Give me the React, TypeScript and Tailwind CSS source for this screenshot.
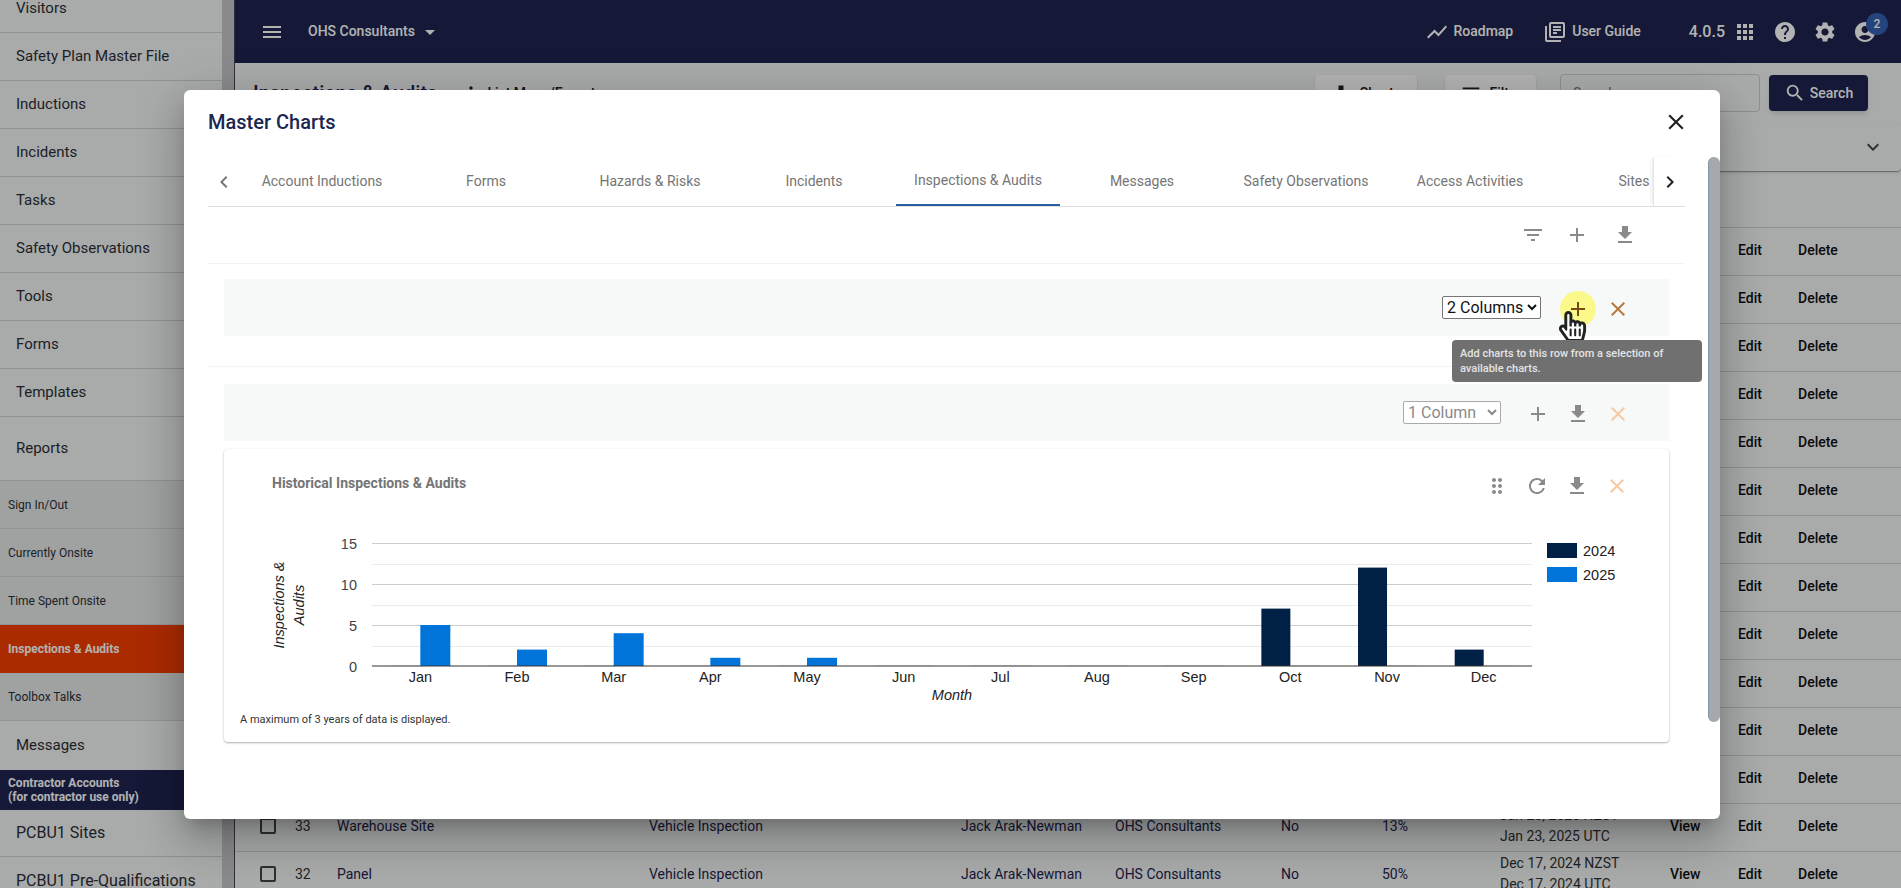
import { FaHandPointer, FaRegHandPointer } from 'react-icons/fa';
import {
  MdAccountCircle,
  MdAdd,
  MdApps,
  MdArrowDropDown,
  MdChevronLeft,
  MdChevronRight,
  MdClose,
  MdDragIndicator,
  MdExpandMore,
  MdFileDownload,
  MdFilterList,
  MdHelp,
  MdMenu,
  MdMoreVert,
  MdOutlineLibraryBooks,
  MdRefresh,
  MdSearch,
  MdSettings,
  MdShowChart,
} from 'react-icons/md';

const topNav = ['Visitors', 'Safety Plan Master File', 'Inductions', 'Incidents', 'Tasks', 'Safety Observations', 'Tools', 'Forms', 'Templates'];
const reportNav = ['Sign In/Out', 'Currently Onsite', 'Time Spent Onsite', 'Inspections & Audits', 'Toolbox Talks'];
const tabs = ['Account Inductions', 'Forms', 'Hazards & Risks', 'Incidents', 'Inspections & Audits', 'Messages', 'Safety Observations', 'Access Activities', 'Sites'];

const rows = [
  ...Array.from({ length: 12 }, (_, i) => ({ id: String(45 - i), site: '', pct: '', date: ['', ''] })),
  { id: '33', site: 'Warehouse Site', pct: '13%', date: ['Jan 23, 2025 NZST', 'Jan 23, 2025 UTC'] },
  { id: '32', site: 'Panel', pct: '50%', date: ['Dec 17, 2024 NZST', 'Dec 17, 2024 UTC'] },
];

const months = [
  { m: 'Jan', a: 0, b: 5 },
  { m: 'Feb', a: 0, b: 2 },
  { m: 'Mar', a: 0, b: 4 },
  { m: 'Apr', a: 0, b: 1 },
  { m: 'May', a: 0, b: 1 },
  { m: 'Jun', a: 0, b: 0 },
  { m: 'Jul', a: 0, b: 0 },
  { m: 'Aug', a: 0, b: 0 },
  { m: 'Sep', a: 0, b: 0 },
  { m: 'Oct', a: 7, b: 0 },
  { m: 'Nov', a: 12, b: 0 },
  { m: 'Dec', a: 2, b: 0 },
];

function Sidebar() {
  return (
    <aside className="flex w-[235px] shrink-0 border-r border-[#3f4560]">
      <div className="w-[222px] shrink-0 -mt-[15px] text-[15px] text-[#2b2f36]">
        {topNav.map((item) => (
          <div key={item} className="flex h-[48px] items-center border-b border-[#cfd1d1] pl-4">
            {item}
          </div>
        ))}
        <div className="flex h-[64px] items-center border-b border-[#cfd1d1] pb-[1px] pl-4">Reports</div>
        {reportNav.map((item) =>
          item === 'Inspections & Audits' ? (
            <div key={item} className="flex h-[48px] items-center bg-[#f53e00] pl-2 text-[12px] font-bold text-white">
              {item}
            </div>
          ) : (
            <div key={item} className="flex h-[48px] items-center border-b border-[#d3d5d5] bg-[#e6e8e8] pl-2 text-[12px]">
              {item}
            </div>
          ),
        )}
        <div className="flex h-[49px] items-center pl-4">Messages</div>
        <div className="flex h-[40px] flex-col justify-center bg-[#1f2550] pl-2 text-[12px] leading-[14px] font-bold text-white">
          <span>Contractor Accounts</span>
          <span>(for contractor use only)</span>
        </div>
        <div className="flex h-[47px] items-center border-b border-[#cfd1d1] pl-4 text-[16px]">PCBU1 Sites</div>
        <div className="flex h-[48px] items-center pl-4 text-[16px]">PCBU1 Pre-Qualifications</div>
      </div>
      <div className="w-[12px] shrink-0 bg-[#c6c6cb]" />
    </aside>
  );
}

function TopBar() {
  return (
    <header className="flex h-[63px] items-center justify-between bg-[#1f2550] pr-[24px] pl-[25px] text-white">
      <div className="flex items-center">
        <MdMenu size={24} />
        <span className="ml-[24px] text-[14px] font-medium">OHS Consultants</span>
        <MdArrowDropDown size={24} className="ml-[3px]" />
      </div>
      <div className="flex items-center">
        <MdShowChart size={24} />
        <span className="ml-[4px] text-[14px] font-medium">Roadmap</span>
        <MdOutlineLibraryBooks size={24} className="ml-[30px]" />
        <span className="ml-[5px] text-[14px] font-medium">User Guide</span>
        <span className="ml-[48px] text-[16px] font-medium">4.0.5</span>
        <MdApps size={24} className="ml-[8px]" />
        <MdHelp size={24} className="ml-[16px]" />
        <MdSettings size={24} className="ml-[16px]" />
        <span className="relative ml-[16px]">
          <MdAccountCircle size={24} />
          <span className="absolute -top-[7px] -right-[11px] flex h-[22px] w-[22px] items-center justify-center rounded-full bg-[#3560b4] text-[12px] font-medium">
            2
          </span>
        </span>
      </div>
    </header>
  );
}

function Table() {
  return (
    <div className="flex-1 overflow-hidden">
      <div className="flex h-[60px] items-center pr-[33px] pl-[18px]">
        <span className="text-[20px] font-medium text-[#1f2550]">Inspections &amp; Audits</span>
        <MdMoreVert size={20} className="ml-[24px]" />
        <span className="ml-[6px] text-[14px] font-medium">List Menu/Export</span>
        <div className="ml-auto flex items-center">
          <div className="flex h-[36px] w-[102px] items-center justify-center gap-2 rounded bg-white text-[14px] font-medium shadow">
            <MdFileDownload size={20} />
            Charts
          </div>
          <div className="ml-[28px] flex h-[36px] w-[91px] items-center justify-center gap-2 rounded bg-white text-[14px] font-medium shadow">
            <MdFilterList size={22} />
            Filter
          </div>
          <div className="ml-[24px] flex h-[38px] w-[200px] items-center rounded border border-[#ccc] pl-3 text-[14px] text-[#777]">Search</div>
          <div className="ml-[9px] flex h-[36px] w-[99px] items-center justify-center gap-1 rounded bg-[#1f2550] text-[14px] font-medium text-white shadow-md">
            <MdSearch size={22} />
            Search
          </div>
        </div>
      </div>
      <div className="flex h-[49px] items-center justify-end rounded border-b border-[#9a9a9a] pr-[16px] shadow">
        <MdExpandMore size={24} className="text-[#444]" />
      </div>
      <div className="h-[56px] border-b border-[#cfd1d1]" />
      {rows.map((row) => (
        <div
          key={row.id}
          className="grid h-[48px] grid-cols-[35px_42px_312px_312px_154px_166px_101px_118px_170px_68px_60px_1fr] items-center border-b border-[#cfd1d1] pb-[3px] pl-[25px] text-[14px] text-[#1f2550]"
        >
          <span className="h-[16px] w-[16px] rounded-[2px] border-2 border-[#444]" />
          <span className="text-[#333]">{row.id}</span>
          <span>{row.site}</span>
          <span>Vehicle Inspection</span>
          <span>Jack Arak-Newman</span>
          <span>OHS Consultants</span>
          <span>No</span>
          <span>{row.pct}</span>
          <span className="leading-[21px] text-[#333]">
            {row.date[0]}
            <br />
            {row.date[1]}
          </span>
          <span className="font-medium text-[#111]">View</span>
          <span className="font-medium text-[#111]">Edit</span>
          <span className="font-medium text-[#111]">Delete</span>
        </div>
      ))}
    </div>
  );
}

function Chart() {
  const base = 666;
  const unit = 8.2;
  return (
    <svg viewBox="224 520 1445 190" className="h-[190px] w-[1445px] [font-family:'Liberation_Sans',Arial,sans-serif]">
      {[564, 605, 646].map((y) => (
        <rect key={y} x={372} y={y} width={1160} height={1} fill="#ebebeb" />
      ))}
      {[543, 584, 625].map((y) => (
        <rect key={y} x={372} y={y} width={1160} height={1} fill="#cccccc" />
      ))}
      {[
        ['15', 543],
        ['10', 584],
        ['5', 625],
        ['0', 666],
      ].map(([label, y]) => (
        <text key={label} x={357} y={Number(y) + 5.5} textAnchor="end" fontSize={14.5} fill="#444">
          {label}
        </text>
      ))}
      {months.map((d, i) => {
        const c = 372 + 96.67 * i + 48.33;
        return (
          <g key={d.m}>
            <rect x={c - 29} y={base - Math.max(d.a * unit, 1)} width={29} height={Math.max(d.a * unit, 1)} fill={d.a ? '#012045' : '#e8e8e8'} />
            <rect x={c} y={base - Math.max(d.b * unit, 1)} width={30} height={Math.max(d.b * unit, 1)} fill={d.b ? '#0074d9' : '#e8e8e8'} />
            <text x={c} y={682} textAnchor="middle" fontSize={14.5} fill="#222">
              {d.m}
            </text>
          </g>
        );
      })}
      <rect x={372} y={665.5} width={1160} height={1} fill="#333" />
      <text x={952} y={700} textAnchor="middle" fontSize={14.5} fontStyle="italic" fill="#222">
        Month
      </text>
      <g transform="rotate(-90 284 605)" fontSize={14.5} fontStyle="italic" fill="#222" textAnchor="middle">
        <text x={284} y={605}>
          Inspections &amp;
        </text>
        <text x={284} y={625}>
          Audits
        </text>
      </g>
      <rect x={1547} y={543} width={30} height={15} fill="#012045" />
      <text x={1583} y={556} fontSize={14.5} fill="#222">
        2024
      </text>
      <rect x={1547} y={567} width={30} height={15} fill="#0074d9" />
      <text x={1583} y={580} fontSize={14.5} fill="#222">
        2025
      </text>
    </svg>
  );
}

function IconBox({ children }: { children: React.ReactNode }) {
  return <span className="flex w-[40px] justify-center">{children}</span>;
}

function MasterCharts() {
  return (
    <div className="absolute top-[90px] left-[184px] z-20 flex h-[729px] w-[1536px] flex-col overflow-hidden rounded-md bg-white pr-[35px] pl-[24px] shadow-[0_11px_15px_-7px_rgba(0,0,0,0.2),0_24px_38px_3px_rgba(0,0,0,0.14),0_9px_46px_8px_rgba(0,0,0,0.12)]">
      <div className="absolute top-[67px] right-0 bottom-[97px] w-[12px] rounded-md border-l border-[#7f95a8] bg-[#a6a9ac]" />
      <div className="flex h-[67px] shrink-0 items-center justify-between pb-[4px]">
        <h2 className="text-[20px] font-medium text-[#1b2750]">Master Charts</h2>
        <MdClose size={26} className="mr-[-4px] text-[#222]" />
      </div>
      <div className="flex h-[50px] shrink-0 border-b border-[#e0e0e0]">
        <span className="flex w-[32px] shrink-0 items-center justify-center text-[#777]">
          <MdChevronLeft size={24} />
        </span>
        <div className="flex flex-1 overflow-hidden">
          {tabs.map((tab) => (
            <span
              key={tab}
              className={
                tab === 'Inspections & Audits'
                  ? 'flex w-[164px] shrink-0 items-center justify-center border-b-2 border-[#2a5ea8] text-[14px] text-[#757575]'
                  : 'flex w-[164px] shrink-0 items-center justify-center text-[14px] text-[#757575]'
              }
            >
              {tab}
            </span>
          ))}
        </div>
        <span className="flex w-[32px] shrink-0 items-center justify-center border-l border-[#e6e6e6] text-[#222] shadow-[-3px_0_4px_-2px_rgba(0,0,0,0.1)]">
          <MdChevronRight size={24} />
        </span>
      </div>
      <div className="flex h-[57px] shrink-0 items-center justify-end border-b border-[#f3f3f3] pr-[48px] text-[#8a8a8a]">
        <MdFilterList size={24} />
        <MdAdd size={24} className="ml-[20px]" />
        <MdFileDownload size={24} className="ml-[24px]" />
      </div>
      <div className="mx-4 mt-[15px] flex h-[57px] shrink-0 items-center justify-end bg-[#f7f9f9] pr-[31px]">
        <select className="h-[23px] w-[99px] rounded-[2px] border border-[#767676] bg-white text-[16px] text-[#111]" defaultValue="2 Columns">
          <option>2 Columns</option>
        </select>
        <div className="mt-[3px] ml-[17px] flex items-center">
          <IconBox>
            <span className="relative flex items-center justify-center">
              <span className="absolute h-[36px] w-[36px] rounded-full bg-[#fbf98a]" />
              <MdAdd size={24} className="relative text-[#7a4a14]" />
              <span className="absolute top-[14px] left-[-9px] h-[31px] w-[27px]">
                <FaHandPointer size={31} className="absolute text-white" />
                <FaRegHandPointer size={31} className="absolute text-[#222]" />
              </span>
              <span className="absolute top-[43px] left-[-114px] z-10 w-[250px] rounded bg-[#707070] px-2 py-[6px] text-[11px] leading-[15px] font-medium text-[#e4e4e4]">
                Add charts to this row from a selection of available charts.
              </span>
            </span>
          </IconBox>
          <IconBox>
            <MdClose size={24} className="text-[#b8793e]" />
          </IconBox>
        </div>
      </div>
      <div className="h-[31px] shrink-0 border-b border-[#f3f3f3]" />
      <div className="mx-4 mt-[17px] flex h-[57px] shrink-0 items-center justify-end bg-[#f7f9f9] pr-[31px]">
        <select className="h-[23px] w-[98px] rounded-[2px] border border-[#aaa] bg-white text-[16px] text-[#8a8a8a]" defaultValue="1 Column">
          <option>1 Column</option>
        </select>
        <div className="mt-[3px] ml-[17px] flex items-center text-[#8a8a8a]">
          <IconBox>
            <MdAdd size={24} />
          </IconBox>
          <IconBox>
            <MdFileDownload size={24} />
          </IconBox>
          <IconBox>
            <MdClose size={24} className="text-[#f9c9a0]" />
          </IconBox>
        </div>
      </div>
      <section className="mx-4 mt-[8px] h-[293px] shrink-0 rounded bg-white shadow-[0_1px_2px_rgba(0,0,0,0.3),0_0_3px_rgba(0,0,0,0.05)]">
        <div className="flex h-[71px] items-start justify-between pt-[24px] pr-[32px] pl-[48px]">
          <h3 className="text-[14px] leading-[20px] font-bold text-[#757575]">Historical Inspections &amp; Audits</h3>
          <div className="mt-[1px] flex text-[#8a8a8a]">
            <IconBox>
              <MdDragIndicator size={24} />
            </IconBox>
            <IconBox>
              <MdRefresh size={24} />
            </IconBox>
            <IconBox>
              <MdFileDownload size={24} />
            </IconBox>
            <IconBox>
              <MdClose size={24} className="text-[#f9c9a0]" />
            </IconBox>
          </div>
        </div>
        <Chart />
        <p className="pl-4 text-[11px] leading-[19px] text-[#333]">A maximum of 3 years of data is displayed.</p>
      </section>
    </div>
  );
}

export default function App() {
  return (
    <div className="relative flex h-[888px] w-full overflow-hidden bg-[#f2f4f4] [font-family:Roboto,sans-serif] text-[#222]">
      <Sidebar />
      <main className="flex min-w-0 flex-1 flex-col">
        <TopBar />
        <Table />
      </main>
      <div className="absolute inset-0 z-10 bg-black/30" />
      <MasterCharts />
    </div>
  );
}
